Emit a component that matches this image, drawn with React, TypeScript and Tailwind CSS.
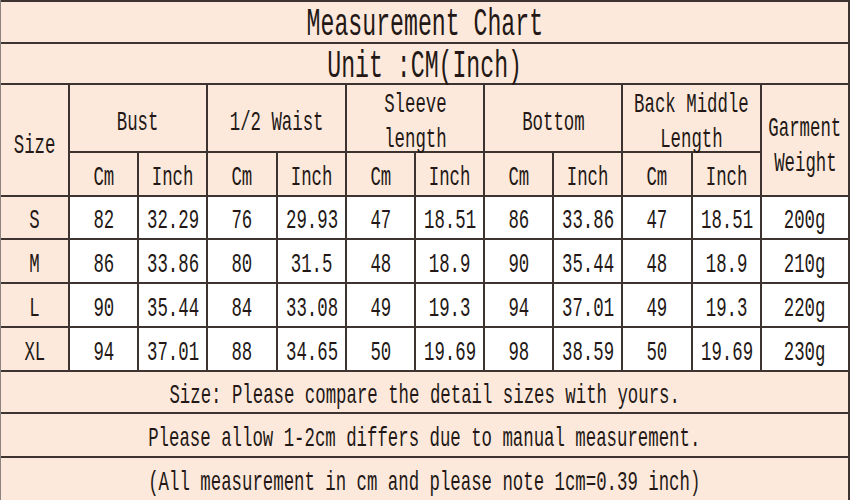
import React from "react";

const FONT = "font-['Liberation_Mono',monospace] text-[#231815]";

function T({ children, big = false }: { children: React.ReactNode; big?: boolean }) {
  return (
    <span
      className={
        big
          ? "inline-block whitespace-nowrap text-[38px] leading-none scale-x-[0.61] translate-y-[3px]"
          : "inline-block whitespace-nowrap text-[28px] leading-[35px] scale-x-[0.62] translate-y-[3px]"
      }
    >
      {children}
    </span>
  );
}

function Cell({
  children,
  white = false,
  className = "",
}: {
  children?: React.ReactNode;
  white?: boolean;
  className?: string;
}) {
  return (
    <div
      className={`${white ? "bg-white" : "bg-[#fde9dc]"} flex flex-col items-center justify-center text-center ${className}`}
    >
      {children}
    </div>
  );
}

const rows = [
  ["S", "82", "32.29", "76", "29.93", "47", "18.51", "86", "33.86", "47", "18.51", "200g"],
  ["M", "86", "33.86", "80", "31.5", "48", "18.9", "90", "35.44", "48", "18.9", "210g"],
  ["L", "90", "35.44", "84", "33.08", "49", "19.3", "94", "37.01", "49", "19.3", "220g"],
  ["XL", "94", "37.01", "88", "34.65", "50", "19.69", "98", "38.59", "50", "19.69", "230g"],
];

export default function App() {
  return (
    <div
      className={`${FONT} w-[850px] h-[500px] bg-[#3d3330] border-l border-[#8c8480] pt-[2px] pr-[2px] flex flex-col gap-[2px] overflow-hidden`}
    >
      <Cell className="h-[40px]">
        <T big>Measurement Chart</T>
      </Cell>
      <Cell className="h-[39px]">
        <T big>Unit :CM(Inch)</T>
      </Cell>
      <div className="grid grid-cols-[67px_67px_67px_68px_67px_67px_67px_67px_67px_68px_67px_86px] grid-rows-[66px_42px_41px_42px_42px_42px] gap-[2px]">
        <Cell className="row-span-2 pt-[4px]">
          <T>Size</T>
        </Cell>
        <Cell className="col-span-2 pt-[2px]">
          <T>Bust</T>
        </Cell>
        <Cell className="col-span-2 pt-[2px]">
          <T>1/2 Waist</T>
        </Cell>
        <Cell className="col-span-2 pt-[2px]">
          <T>Sleeve</T>
          <T>length</T>
        </Cell>
        <Cell className="col-span-2 pt-[2px]">
          <T>Bottom</T>
        </Cell>
        <Cell className="col-span-2 pt-[2px]">
          <T>Back Middle</T>
          <T>Length</T>
        </Cell>
        <Cell className="row-span-2 pt-[6px]">
          <T>Garment</T>
          <T>Weight</T>
        </Cell>
        {["Cm", "Inch", "Cm", "Inch", "Cm", "Inch", "Cm", "Inch", "Cm", "Inch"].map((t, i) => (
          <Cell key={i}>
            <T>{t}</T>
          </Cell>
        ))}
        {rows.map((r, ri) =>
          r.map((v, ci) => (
            <Cell key={`${ri}-${ci}`} white={ci !== 0}>
              <T>{v}</T>
            </Cell>
          ))
        )}
      </div>
      <Cell className="h-[40px]">
        <T>Size: Please compare the detail sizes with yours.</T>
      </Cell>
      <Cell className="h-[42px]">
        <T>Please allow 1-2cm differs due to manual measurement.</T>
      </Cell>
      <Cell className="h-[42px]">
        <T>(All measurement in cm and please note 1cm=0.39 inch)</T>
      </Cell>
    </div>
  );
}
